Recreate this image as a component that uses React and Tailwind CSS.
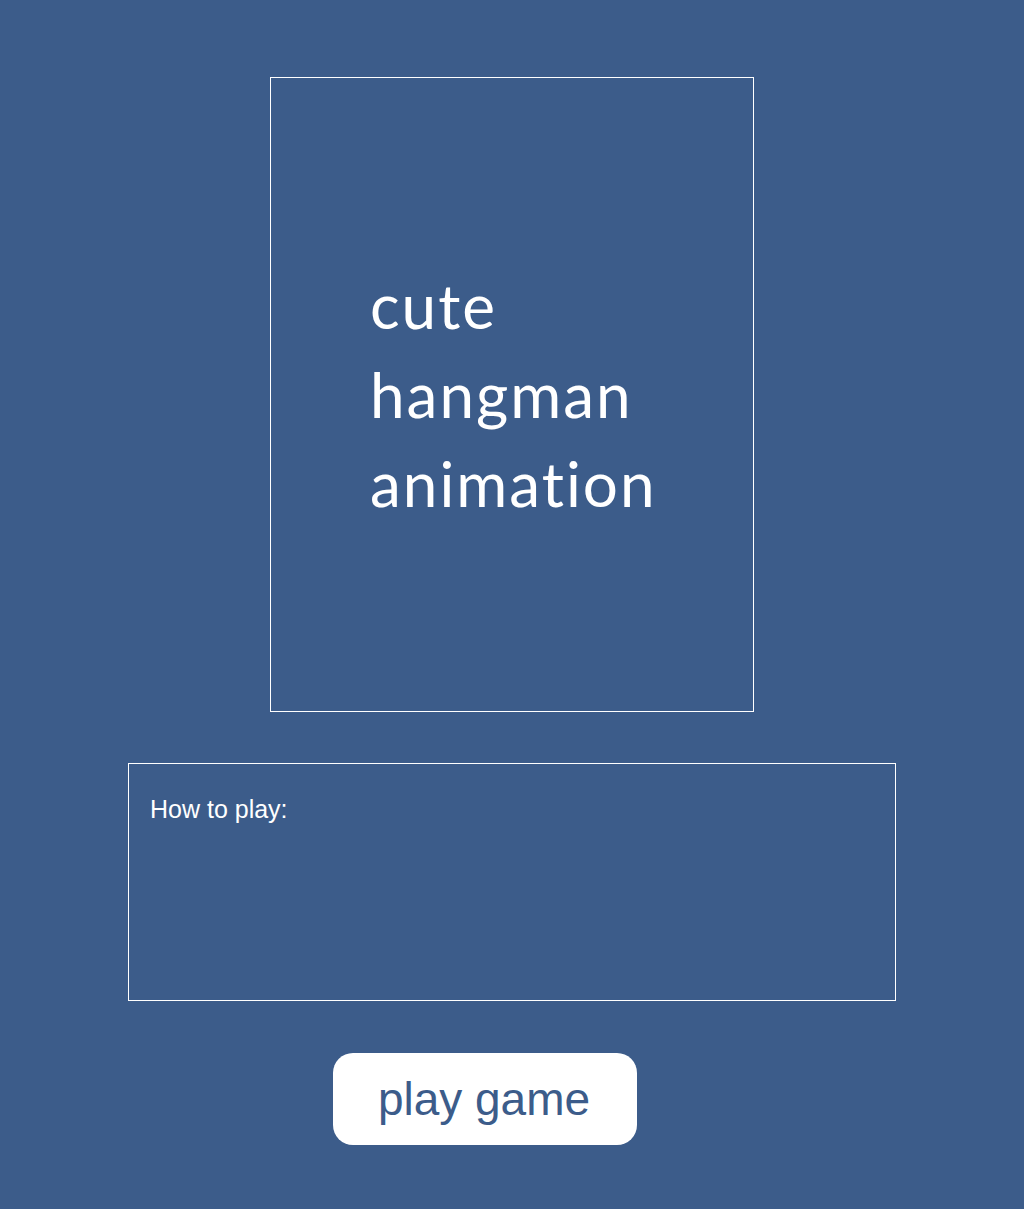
export default function App() {
  return (
    <div className="min-h-[1209px] w-full bg-[#3c5c8a] pt-[77px] pb-[64px]">
      <div className="mx-auto flex h-[635px] w-[484px] items-center border border-white pl-[99px]">
        <h1
          className="text-[62px] leading-[89px] font-normal tracking-[2px] text-white [font-variant-ligatures:none]"
          style={{ fontFamily: "Lato, 'Open Sans', sans-serif" }}
        >
          cute
          <br />
          hangman
          <br />
          animation
        </h1>
      </div>
      <div
        className="mx-auto mt-[51px] h-[238px] w-[768px] border border-white pl-[21px] pt-[31px] text-white"
        style={{ fontFamily: "'Liberation Sans', Arial, sans-serif" }}
      >
        <p className="text-[25px] leading-[28px]">How to play:</p>
      </div>
      <div className="mt-[52px] pl-[333px]">
        <button
          className="flex h-[92px] w-[304px] items-center justify-center rounded-[20px] bg-white pr-[2px] text-[46px] text-[#3c5c8a]"
          style={{ fontFamily: "'Liberation Sans', Arial, sans-serif" }}
        >
          play game
        </button>
      </div>
    </div>
  );
}
